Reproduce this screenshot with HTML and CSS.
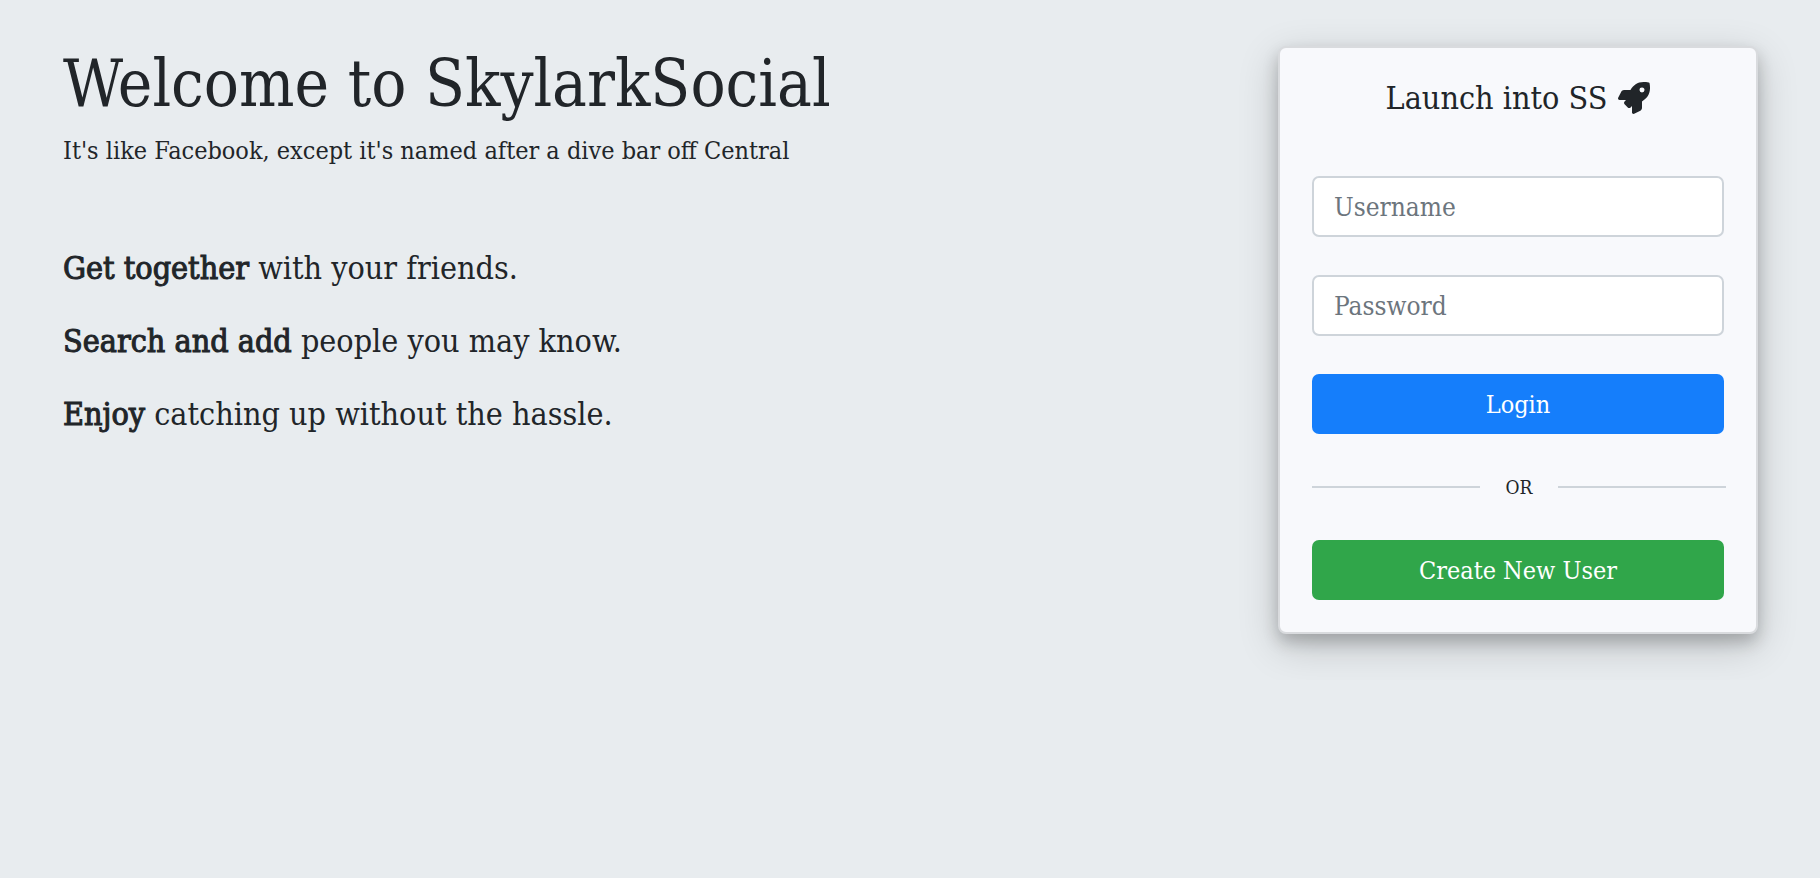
FILE: index.html
```html
<!DOCTYPE html>
<html lang="en">
<head>
<meta charset="utf-8">
<meta name="viewport" content="width=device-width, initial-scale=1">
<title>SkylarkSocial</title>
<link rel="stylesheet" href="styles.css">
</head>
<body>
<main class="page">
  <section class="intro">
    <h1 class="title">Welcome to SkylarkSocial</h1>
    <p class="tagline">It's like Facebook, except it's named after a dive bar off Central</p>
    <div class="features">
      <p class="feature"><strong>Get together</strong> with your friends.</p>
      <p class="feature"><strong>Search and add</strong> people you may know.</p>
      <p class="feature"><strong>Enjoy</strong> catching up without the hassle.</p>
    </div>
  </section>
  <section class="card">
    <h2 class="card-title">Launch into SS
      <svg class="rocket" viewBox="0 0 512 512" aria-hidden="true"><path fill="currentColor" d="M505.12019,19.09375c-1.18945-5.53125-6.65819-11-12.207-12.1875C460.716,0,435.507,0,410.40747,0,307.17523,0,245.26909,55.20312,199.05238,128H94.83772c-16.34763.01562-35.55658,11.875-42.88664,26.48438L2.51562,253.29688A28.4,28.4,0,0,0,0,264a24.00867,24.00867,0,0,0,24.00582,24H127.81618l-22.47457,22.46875c-11.36521,11.36133-12.99607,32.25781,0,45.25L156.24582,406.625c11.15623,11.1875,32.15619,13.15625,45.27726,0l22.47457-22.46875V488a24.00867,24.00867,0,0,0,24.00581,24,28.55934,28.55934,0,0,0,10.707-2.51562l98.72834-49.39063c14.62888-7.29687,26.50776-26.5,26.50776-42.85937V312.79688c72.59753-46.3125,128.03493-108.40626,128.03493-211.09376C512.07526,76.5,512.07526,51.29688,505.12019,19.09375ZM384.04033,168A40,40,0,1,1,424.05,128,40.02322,40.02322,0,0,1,384.04033,168Z"/></svg>
    </h2>
    <form class="form">
      <input class="field" type="text" name="username" placeholder="Username" aria-label="Username">
      <input class="field" type="password" name="password" placeholder="Password" aria-label="Password">
      <button class="button login" type="submit">Login</button>
      <div class="divider">OR</div>
      <button class="button create" type="button">Create New User</button>
    </form>
  </section>
</main>
</body>
</html>
```
FILE: styles.css
```css
* {
  box-sizing: border-box;
}

body {
  margin: 0;
  background: #e8ecef;
  color: #212529;
  font-family: "DejaVu Serif Condensed", "DejaVu Serif", serif;
}

h1, h2, p {
  margin: 0;
  font-weight: 400;
}

.page {
  display: flex;
  justify-content: space-between;
  align-items: flex-start;
  gap: 32px;
  padding: 46px 62px 46px 63px;
}

.title {
  font-size: 65px;
  line-height: 76px;
}

.tagline {
  margin-top: 10px;
  font-size: 25px;
  line-height: 38px;
}

.features {
  display: flex;
  flex-direction: column;
  gap: 25px;
  margin-top: 74px;
}

.feature {
  font-size: 32px;
  line-height: 48px;
}

.feature strong {
  font-weight: 400;
  -webkit-text-stroke: 1px currentColor;
}

.card {
  flex: 0 0 480px;
  padding: 32px;
  background: #f8f9fc;
  border: 2px solid #d9dbde;
  border-radius: 8px;
  box-shadow: 0 8px 16px rgba(0, 0, 0, 0.2), 0 12px 40px rgba(0, 0, 0, 0.19);
}

.card-title {
  display: flex;
  justify-content: center;
  align-items: center;
  gap: 11px;
  font-size: 32px;
  line-height: 36px;
}

.rocket {
  width: 32px;
  height: 32px;
}

.form {
  display: flex;
  flex-direction: column;
  gap: 38px;
  margin-top: 60px;
}

.field,
.button {
  width: 100%;
  height: 60px;
  border-radius: 7px;
  font: inherit;
  font-size: 25px;
}

.field {
  height: 61px;
  padding: 0 20px;
  background: #fff;
  border: 2px solid #ced4da;
  color: #495057;
  font-size: 26px;
}

.field::placeholder {
  color: #6c757d;
  opacity: 1;
}

.button {
  border: 0;
  color: #fff;
  cursor: pointer;
}

.login {
  background: #157efb;
}

.create {
  background: #30a64a;
}

.divider {
  display: flex;
  align-items: center;
  gap: 26px;
  margin-right: -2px;
  font-size: 19px;
  line-height: 30px;
}

.divider::before,
.divider::after {
  content: "";
  flex: 1;
  height: 2px;
  background: #ced4da;
}
```
